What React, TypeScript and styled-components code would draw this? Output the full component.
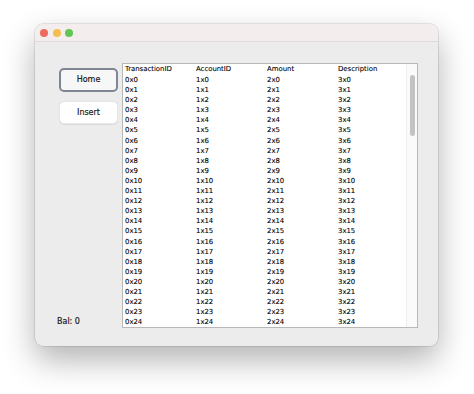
import React from 'react';
import styled, { createGlobalStyle } from 'styled-components';

const GlobalStyle = createGlobalStyle`
  html, body {
    margin: 0;
    padding: 0;
    background: #ffffff;
  }
`;

const Page = styled.div`
  width: 474px;
  height: 394px;
  padding: 24px 0 0 35px;
  box-sizing: border-box;
`;

const Window = styled.div`
  width: 403px;
  height: 322px;
  border-radius: 8px;
  overflow: hidden;
  background: #ececec;
  box-shadow: 0 14px 32px rgba(0, 0, 0, 0.3), 0 0 0 0.5px rgba(0, 0, 0, 0.18);
  display: flex;
  flex-direction: column;
`;

const TitleBar = styled.div`
  height: 16px;
  flex-shrink: 0;
  display: flex;
  align-items: center;
  gap: 4.6px;
  padding: 1px 0 0 5px;
  background: #f3eded;
  border-bottom: 1px solid #e0dada;
`;

const Light = styled.span<{ $color: string }>`
  width: 8px;
  height: 8px;
  border-radius: 50%;
  background: ${(p) => p.$color};
`;

const Body = styled.div`
  flex: 1;
  display: grid;
  grid-template-columns: 87px 296px;
  padding: 21px 20px 19px 0;
`;

const Sidebar = styled.div`
  display: flex;
  flex-direction: column;
  padding: 4.5px 0 2px 24px;
  font-family: 'DejaVu Sans', Verdana, sans-serif;
`;

const Button = styled.button<{ $focused?: boolean }>`
  width: 59px;
  height: ${(p) => (p.$focused ? '24.5px' : '23px')};
  margin-bottom: 9px;
  border-radius: 5px;
  font-family: 'DejaVu Sans', Verdana, sans-serif;
  font-size: 8px;
  color: #111;
  -webkit-text-stroke: 0.15px #111;
  background: ${(p) => (p.$focused ? '#f7f7f7' : '#ffffff')};
  border: ${(p) => (p.$focused ? '2px solid #7d8691' : '1px solid #e6e6e6')};
  box-shadow: ${(p) => (p.$focused ? 'none' : '0 0.5px 1px rgba(0,0,0,0.08)')};
  padding: 0;
`;

const Balance = styled.div`
  margin-top: auto;
  margin-left: -2px;
  font-size: 8px;
  color: #111;
  -webkit-text-stroke: 0.15px #111;
`;

const Table = styled.div`
  position: relative;
  background: #ffffff;
  border: 1px solid #b8b8b8;
  font-family: 'DejaVu Sans', Verdana, sans-serif;
  font-size: 6.9px;
  color: #000;
  -webkit-text-stroke: 0.1px #000;
  overflow: hidden;
`;

const Row = styled.div<{ $header?: boolean }>`
  display: grid;
  grid-template-columns: repeat(4, 71px);
  height: ${(p) => (p.$header ? '11px' : '10.1px')};
  line-height: ${(p) => (p.$header ? '11px' : '10.1px')};
`;

const Cell = styled.div`
  padding-left: 2px;
  white-space: nowrap;
`;

const Track = styled.div`
  position: absolute;
  top: 0;
  right: 0;
  bottom: 0;
  width: 10px;
  background: #fafafa;
  border-left: 1px solid #eeeeee;
`;

const Thumb = styled.div`
  position: absolute;
  top: 11px;
  left: 2.5px;
  width: 5.5px;
  height: 61px;
  border-radius: 3px;
  background: #c3c3c3;
`;

const rows = Array.from({ length: 25 }, (_, i) => [
  `0x${i}`,
  `1x${i}`,
  `2x${i}`,
  `3x${i}`,
]);

const App = () => {
  return (
    <Page>
      <GlobalStyle />
      <Window>
        <TitleBar>
          <Light $color='#ec6a5e' />
          <Light $color='#f4bf4f' />
          <Light $color='#61c554' />
        </TitleBar>
        <Body>
          <Sidebar>
            <Button $focused>Home</Button>
            <Button>Insert</Button>
            <Balance>Bal: 0</Balance>
          </Sidebar>
          <Table>
            <Row $header>
              <Cell>TransactionID</Cell>
              <Cell>AccountID</Cell>
              <Cell>Amount</Cell>
              <Cell>Description</Cell>
            </Row>
            {rows.map((r) => (
              <Row key={r[0]}>
                {r.map((c) => (
                  <Cell key={c}>{c}</Cell>
                ))}
              </Row>
            ))}
            <Track>
              <Thumb />
            </Track>
          </Table>
        </Body>
      </Window>
    </Page>
  );
};

export default App;
